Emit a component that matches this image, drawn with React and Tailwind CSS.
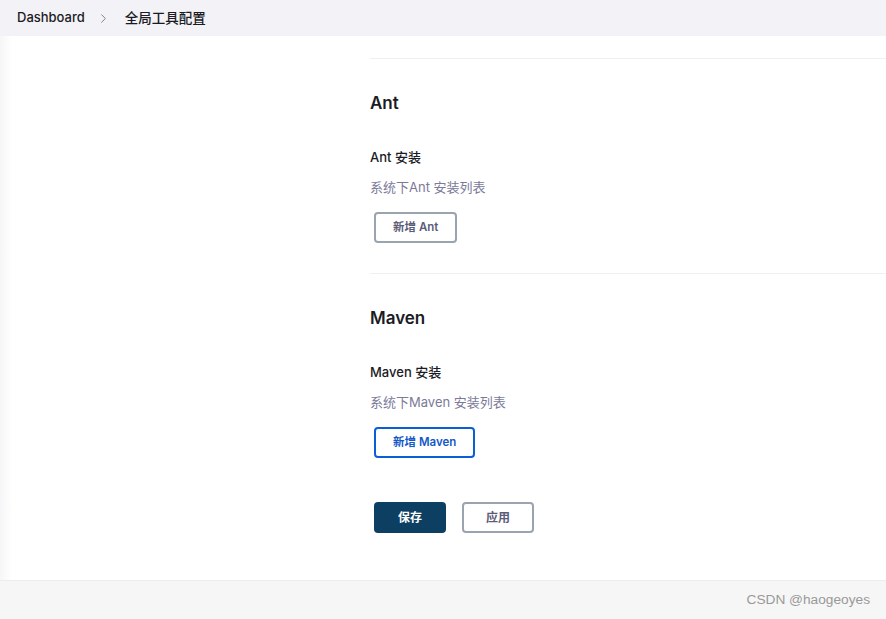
import { ChevronRight } from 'lucide-react';

const sections = [
  { name: 'Ant', active: false },
  { name: 'Maven', active: true },
];

function ToolSection({ name, active }) {
  return (
    <section className="border-t border-[#efeff4]">
      <h2 className="mt-8 text-[17px] leading-6 font-semibold text-[#1b1b25]">{name}</h2>
      <h3 className="mt-8 text-[13px] leading-5 font-medium text-[#1b1b25]">{name} 安装</h3>
      <p className="mt-2.5 text-[13px] leading-5 text-[#7b7b99]">系统下{name} 安装列表</p>
      <button
        className={`ml-1 mt-[15px] h-[31px] px-[17px] rounded-[4px] border-2 text-[11.5px] font-semibold ${
          active ? 'border-[#0b5fd5] text-[#1258c8]' : 'border-[#9aa4af] text-[#5c5c78]'
        }`}
      >
        新增 {name}
      </button>
      <div className="h-[30px]" />
    </section>
  );
}

export default function App() {
  return (
    <div
      className="h-screen flex flex-col bg-white"
      style={{ fontFamily: 'Inter, "Noto Sans CJK SC", sans-serif' }}
    >
      {/* Breadcrumb */}
      <header className="h-9 shrink-0 bg-[#f2f2f7] flex items-center px-[17px] text-[13px] font-medium text-[#1b1b25]">
        <span>Dashboard</span>
        <ChevronRight className="w-[15px] h-[15px] ml-[11px] mr-[14px] text-[#7a7a88]" strokeWidth={1.5} />
        <span className="text-[13.5px]">全局工具配置</span>
      </header>

      <div className="flex-1 flex min-h-0">
        <aside className="w-[12px] shrink-0 bg-gradient-to-r from-[#f6f6f8] to-white" />
        <main className="flex-1 pl-[358px] pt-[22px]">
          {sections.map((s) => (
            <ToolSection key={s.name} {...s} />
          ))}
          <div className="mt-[14px] ml-1 flex gap-4">
            <button className="h-[31px] w-[72px] rounded-[4px] bg-[#0d3f63] text-white text-[12px] font-semibold">
              保存
            </button>
            <button className="h-[31px] w-[72px] rounded-[4px] border-2 border-[#9aa4af] text-[#5c5c78] text-[12px] font-semibold">
              应用
            </button>
          </div>
        </main>
      </div>

      <footer
        className="h-[39px] shrink-0 bg-[#f6f6f6] border-t border-[#ececec] flex items-center justify-end pr-4 text-[13.7px] text-[#999999]"
        style={{ fontFamily: '"Liberation Sans", Arial, sans-serif' }}
      >
        CSDN @haogeoyes
      </footer>
    </div>
  );
}
